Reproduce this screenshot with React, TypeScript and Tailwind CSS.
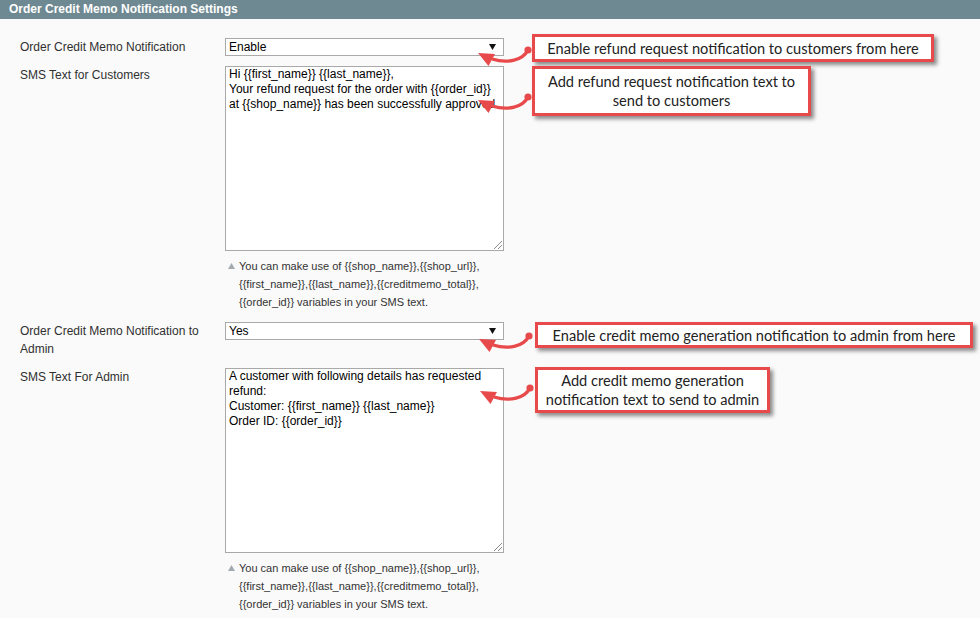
import React from "react";

const label = "w-[205px] shrink-0 text-[12px] leading-[18px] text-[#303030]";
const callout =
  "box-border flex flex-col items-center justify-center border-[3px] border-[#e84a4b] bg-white text-center font-['Lato',sans-serif] text-[14.6px] leading-[19px] text-[#222] shadow-[3px_3px_4px_rgba(0,0,0,0.45)]";

function Select({ value }: { value: string }) {
  return (
    <div className="box-border flex h-[18px] w-[279px] shrink-0 items-center justify-between border border-[#a9a9a9] bg-white pl-[3px] pr-[7px] text-[12px] text-black">
      <span>{value}</span>
      <svg width="7" height="6" viewBox="0 0 7 6">
        <polygon points="0,0 7,0 3.5,6" fill="#111" />
      </svg>
    </div>
  );
}

function TextBox({ lines }: { lines: string[] }) {
  return (
    <div className="relative box-border h-[185px] w-[279px] overflow-hidden border border-[#a9a9a9] bg-white px-[3px] text-[12px] leading-[15px] text-black">
      {lines.map((l, i) => (
        <div key={i} className="whitespace-nowrap">
          {l}
        </div>
      ))}
      <svg className="absolute bottom-[1px] right-[1px]" width="9" height="9" viewBox="0 0 9 9">
        <line x1="1" y1="9" x2="9" y2="1" stroke="#888" strokeWidth="1" />
        <line x1="5" y1="9" x2="9" y2="5" stroke="#888" strokeWidth="1" />
      </svg>
    </div>
  );
}

function Note() {
  return (
    <div className="mt-[6px] flex w-[279px] text-[11px] leading-[18px] text-[#333]">
      <svg className="ml-[3px] mr-[4px] mt-[6px] shrink-0" width="7" height="6" viewBox="0 0 7 6">
        <polygon points="3.5,0 7,6 0,6" fill="#a3abb0" />
      </svg>
      <div>
        You can make use of {"{{shop_name}}"},{"{{shop_url}}"},
        <br />
        {"{{first_name}}"},{"{{last_name}}"},{"{{creditmemo_total}}"},
        <br />
        {"{{order_id}}"} variables in your SMS text.
      </div>
    </div>
  );
}

function Arrow({ x, y }: { x: number; y: number }) {
  return (
    <g transform={`translate(${x} ${y})`}>
      <circle cx="0" cy="0" r="3.6" fill="#e84a4b" />
      <path d="M0 0 C -5 10, -20 14, -36 9" fill="none" stroke="#e84a4b" strokeWidth="3.2" />
      <polygon points="-50,3 -33,4 -39.5,16" fill="#e84a4b" />
    </g>
  );
}

export default function App() {
  return (
    <div className="relative min-h-[618px] w-[980px] overflow-hidden bg-[#fafafa] font-['Liberation_Sans',Arial,sans-serif]">
      <div className="h-[19px] bg-[#6f8992] pl-[9px] text-[12px] font-bold leading-[19px] text-white">
        Order Credit Memo Notification Settings
      </div>

      <div className="pl-[20px] pt-[19px]">
        {/* Row 1 */}
        <div className="flex items-start">
          <div className={label}>Order Credit Memo Notification</div>
          <Select value="Enable" />
          <div className={`${callout} ml-[28px] mt-[-4px] h-[28px] w-[402px]`}>
            Enable refund request notification to customers from here
          </div>
        </div>

        {/* Row 2 */}
        <div className="mt-[4px] flex items-start">
          <div className={label}>SMS Text for Customers</div>
          <div>
            <TextBox
              lines={[
                "Hi {{first_name}} {{last_name}},",
                "Your refund request for the order with {{order_id}}",
                "at {{shop_name}} has been successfully approved.",
              ]}
            />
            <Note />
          </div>
          <div className={`${callout} ml-[28px] h-[50px] w-[279px]`}>
            <span>Add refund request notification text to</span>
            <span>send to customers</span>
          </div>
        </div>

        {/* Row 3 */}
        <div className="mt-[11px] flex items-start">
          <div className={label}>
            Order Credit Memo Notification to
            <br />
            Admin
          </div>
          <Select value="Yes" />
          <div className={`${callout} ml-[31px] h-[26px] w-[438px]`}>
            Enable credit memo generation notification to admin from here
          </div>
        </div>

        {/* Row 4 */}
        <div className="mt-[10px] flex items-start">
          <div className={label}>SMS Text For Admin</div>
          <div>
            <TextBox
              lines={[
                "A customer with following details has requested",
                "refund:",
                "Customer: {{first_name}} {{last_name}}",
                "Order ID: {{order_id}}",
              ]}
            />
            <Note />
          </div>
          <div className={`${callout} ml-[31px] mt-[-1px] h-[46px] w-[235px]`}>
            <span>Add credit memo generation</span>
            <span>notification text to send to admin</span>
          </div>
        </div>
      </div>

      <svg className="pointer-events-none absolute left-0 top-0" width="980" height="618">
        <Arrow x={528} y={50} />
        <Arrow x={528} y={97} />
        <Arrow x={529} y={336} />
        <Arrow x={530} y={388} />
      </svg>
    </div>
  );
}
